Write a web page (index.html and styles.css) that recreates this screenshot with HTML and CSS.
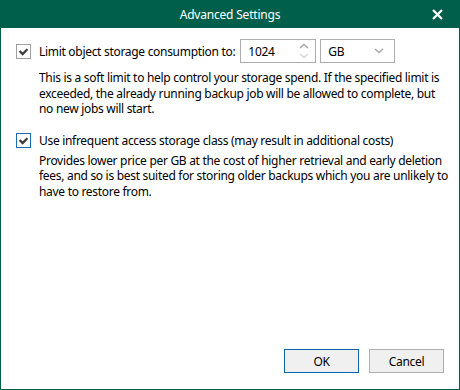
FILE: index.html
```html
<!DOCTYPE html>
<html lang="en">
<head>
  <meta charset="UTF-8" />
  <title>Advanced Settings</title>
  <link rel="stylesheet" href="styles.css">
</head>
<body>
  <div class="dialog">
    <div class="titlebar">
      <span></span>
      <span class="title">Advanced Settings</span>
      <button class="close" aria-label="Close">
        <svg width="11" height="11" viewBox="0 0 11 11"><path d="M1 1L10 10M10 1L1 10" stroke="#fff" stroke-width="2.2"/></svg>
      </button>
    </div>

    <div class="content">
      <div class="option">
        <div class="row">
          <span class="check">
            <svg width="13" height="13" viewBox="0 0 13 13"><path d="M2.6 6L5.6 9L10.4 4.2" fill="none" stroke="#3c3c3c" stroke-width="2.3"/></svg>
          </span>
          <span class="label">Limit object storage consumption to:</span>
          <div class="spin">
            <span class="spin-value">1024</span>
            <span class="spin-arrows">
              <svg width="10" height="6" viewBox="0 0 10 6"><path d="M1 5L5 1.5L9 5" fill="none" stroke="#a8a8a8" stroke-width="1.5"/></svg>
              <svg width="10" height="6" viewBox="0 0 10 6"><path d="M1 1L5 4.5L9 1" fill="none" stroke="#d8d8d8" stroke-width="1.5"/></svg>
            </span>
          </div>
          <div class="select">
            <span>GB</span>
            <svg width="10" height="6" viewBox="0 0 10 6"><path d="M1 1L5 4.5L9 1" fill="none" stroke="#a8a8a8" stroke-width="1.5"/></svg>
          </div>
        </div>
        <p class="desc">This is a soft limit to help control your storage spend. If the specified limit is<br>exceeded, the already running backup job will be allowed to complete, but<br>no new jobs will start.</p>
      </div>

      <div class="option">
        <div class="row short">
          <span class="check focused">
            <svg width="13" height="13" viewBox="0 0 13 13"><path d="M2.6 6L5.6 9L10.4 4.2" fill="none" stroke="#3c3c3c" stroke-width="2.3"/></svg>
          </span>
          <span class="label">Use infrequent access storage class (may result in additional costs)</span>
        </div>
        <p class="desc">Provides lower price per GB at the cost of higher retrieval and early deletion<br>fees, and so is best suited for storing older backups which you are unlikely to<br>have to restore from.</p>
      </div>
    </div>

    <div class="footer">
      <button class="btn default">OK</button>
      <button class="btn">Cancel</button>
    </div>
  </div>
</body>
</html>
```

FILE: styles.css
```css
* {
  box-sizing: border-box;
}
body {
  margin: 0;
  font-family: "Noto Sans", "Open Sans", sans-serif;
  font-size: 12px;
  letter-spacing: -0.3px;
  color: #000;
  background: #fff;
}
.dialog {
  width: 460px;
  height: 390px;
  display: flex;
  flex-direction: column;
  border: 1px solid #005f4b;
  border-top: none;
}
.titlebar {
  height: 28px;
  margin: 0 -1px;
  display: grid;
  grid-template-columns: 1fr auto 1fr;
  align-items: center;
  background: #005f4b;
  color: #fff;
}
.title {
  font-size: 12px;
  letter-spacing: -0.2px;
}
.close {
  justify-self: end;
  margin-right: 17px;
  padding: 0;
  border: none;
  background: none;
  display: flex;
}
.content {
  flex: 1;
  padding: 11px 15px 0 15px;
  display: flex;
  flex-direction: column;
  gap: 16px;
}
.row {
  display: flex;
  align-items: center;
  height: 24px;
}
.row.short {
  height: 16px;
}
.check {
  width: 15px;
  height: 15px;
  border: 1px solid #a0a0a0;
  display: flex;
  align-items: center;
  justify-content: center;
  margin-right: 8px;
}
.check.focused {
  border-color: #1c6bb5;
}
.label {
  white-space: nowrap;
}
.spin {
  margin-left: 5px;
  width: 76px;
  height: 24px;
  border: 1px solid #adadad;
  display: flex;
  align-items: center;
  justify-content: space-between;
  padding-left: 7px;
}
.spin-arrows {
  width: 22px;
  height: 100%;
  display: flex;
  flex-direction: column;
  align-items: center;
  justify-content: center;
  gap: 4px;
}
.select {
  margin-left: 4px;
  width: 75px;
  height: 24px;
  border: 1px solid #adadad;
  display: flex;
  align-items: center;
  justify-content: space-between;
  padding: 0 10px 0 7px;
}
.desc {
  margin: 7px 0 0 23px;
  line-height: 15.5px;
  white-space: nowrap;
}
.short + .desc {
  margin-top: 4px;
}
.footer {
  display: flex;
  justify-content: flex-end;
  gap: 10px;
  padding: 0 15px 16px 0;
}
.btn {
  width: 75px;
  height: 24px;
  font-family: inherit;
  font-size: 12px;
  letter-spacing: inherit;
  color: #000;
  background: #f0f0f0;
  border: 1px solid #adadad;
  padding: 0;
}
.btn.default {
  border-color: #0a64ad;
}
```
